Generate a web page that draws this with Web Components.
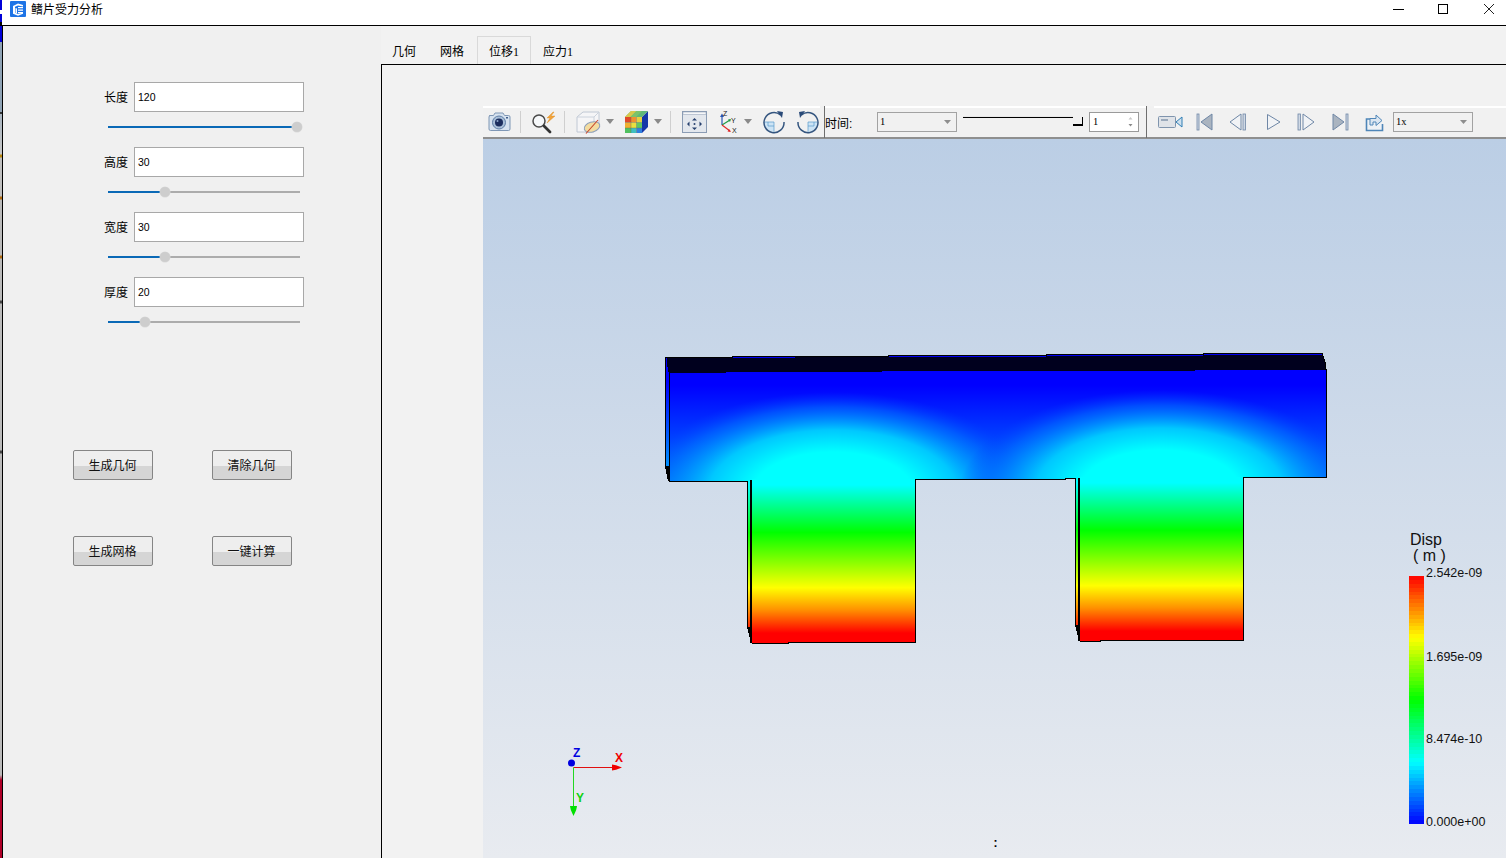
<!DOCTYPE html>
<html>
<head>
<meta charset="utf-8">
<style>
  html, body { margin: 0; padding: 0; background: #f0f0f0; }
</style>
</head>
<body>
<fin-app>
  <fin-titlebar slot="title" text="鳍片受力分析"></fin-titlebar>
  <fin-panel slot="panel">
    <fin-param label="长度" value="120" pos="189"></fin-param>
    <fin-param label="高度" value="30" pos="57"></fin-param>
    <fin-param label="宽度" value="30" pos="57"></fin-param>
    <fin-param label="厚度" value="20" pos="37"></fin-param>
    <fin-button slot="buttons">生成几何</fin-button>
    <fin-button slot="buttons">清除几何</fin-button>
    <fin-button slot="buttons">生成网格</fin-button>
    <fin-button slot="buttons">一键计算</fin-button>
  </fin-panel>
  <fin-tabs slot="main">
    <fin-toolbar></fin-toolbar>
    <fin-viewport></fin-viewport>
  </fin-tabs>
</fin-app>

<script>
class FinApp extends HTMLElement {
  constructor() {
    super();
    const shadow = this.attachShadow({ mode: 'open' });
    // the strip on the far left is the window behind this one peeking out
    shadow.innerHTML = `
      <style>
        :host { display: flex; width: 1506px; height: 858px; overflow: hidden; background: #f0f0f0; color: #000;
                font: 12px "Liberation Sans", "Noto Sans CJK SC", sans-serif; }
        .edge { width: 2px; flex: none; background: linear-gradient(to bottom,
          #0000d8 0, #0000d8 10px, #fff 10px, #fff 14px, #0000d8 14px, #0000d8 22px, #000 22px, #000 26px, #0000d8 26px, #0000d8 42px,
          #8fa3b5 42px, #8fa3b5 112px, #333 112px, #333 114px, #a8b4c0 114px, #c8c8c8 154px, #b8860b 155px, #b8860b 157px, #c0c0c0 158px,
          #c0c0c0 196px, #b06a10 197px, #b06a10 199px, #bbb 200px, #bbb 255px, #b06a10 256px, #b06a10 258px, #bbb 259px,
          #bbb 300px, #444 301px, #444 303px, #bbb 304px, #bbb 450px, #444 451px, #444 453px, #bbb 454px, #bbb 775px,
          #b00028 780px, #b00028 858px); }
        .win { flex: 1; display: flex; flex-direction: column; min-width: 0; }
        .body { flex: 1; display: flex; border-left: 1px solid #000; min-height: 0; }
      </style>
      <div class="edge"></div>
      <div class="win">
        <slot name="title"></slot>
        <div class="body">
          <slot name="panel"></slot>
          <slot name="main"></slot>
        </div>
      </div>`;
  }
}

class FinTitlebar extends HTMLElement {
  constructor() {
    super();
    const shadow = this.attachShadow({ mode: 'open' });
    shadow.innerHTML = `
      <style>
        :host { display: flex; height: 25px; background: #fff; border-bottom: 1px solid #000; align-items: flex-start; padding-left: 8px; box-sizing: content-box; }
        .logo { width: 16px; height: 16px; margin-top: 1px; margin-right: 5px; flex: none; }
        .text { line-height: 20px; font-size: 12px; flex: 1; }
        .btns { display: flex; }
        svg.b { display: block; width: 46px; height: 20px; }
      </style>
      <svg class="logo" viewBox="0 0 16 16">
        <rect width="16" height="16" rx="1" fill="#1e74e6"/>
        <path d="M3 5l5-2.500 5 1.500v1.500l-5-1-3 1.200v6l3 1.300 5-1.500v1.300l-5 2-5-2z" fill="#fff"/>
        <path d="M8 6h5v1.300h-5zM8 8.500h5v1.300h-5zM8 11h5v1.300h-5zM5.500 7l1.500.5v5l-1.500-.5z" fill="#fff"/>
      </svg>
      <div class="text"></div>
      <div class="btns">
        <svg class="b" viewBox="0 0 46 20"><path d="M25 9.500h11" stroke="#000" fill="none"/></svg>
        <svg class="b" viewBox="0 0 46 20"><rect x="24.500" y="4.500" width="9" height="9" fill="none" stroke="#000"/></svg>
        <svg class="b" viewBox="0 0 46 20"><path d="M24 4l10 10M34 4l-10 10" stroke="#222" fill="none" stroke-width="1"/></svg>
      </div>`;
    shadow.querySelector('.text').textContent = this.getAttribute('text');
  }
}

class FinPanel extends HTMLElement {
  constructor() {
    super();
    const shadow = this.attachShadow({ mode: 'open' });
    shadow.innerHTML = `
      <style>
        :host { display: block; width: 378px; flex: none; background: #f0f0f0; padding-top: 56px; box-sizing: border-box; }
        .params { display: flex; flex-direction: column; gap: 5px; }
        .buttons { display: grid; grid-template-columns: 80px 80px; column-gap: 59px; row-gap: 56px; margin: 113px 0 0 70px; }
      </style>
      <div class="params"><slot></slot></div>
      <div class="buttons"><slot name="buttons"></slot></div>`;
  }
}

class FinParam extends HTMLElement {
  constructor() {
    super();
    const shadow = this.attachShadow({ mode: 'open' });
    const pos = Number(this.getAttribute('pos'));
    shadow.innerHTML = `
      <style>
        :host { display: block; }
        .row { display: flex; height: 30px; align-items: center; }
        label { width: 125px; text-align: right; padding-bottom: 1px; font-size: 12px; }
        .input { width: 170px; height: 30px; margin-left: 6px; box-sizing: border-box; background: #fff; border: 1px solid #a8a8a8;
                 padding: 0 3px; line-height: 28px; font-size: 10.500px; }
        .slider { position: relative; height: 30px; width: 192px; margin-left: 105px; }
        .track { position: absolute; left: 0; right: 0; top: 14px; height: 2px; background: #acacac; }
        .fill { position: absolute; left: 0; top: 14px; height: 2px; background: #0a69b6; width: ${pos}px; }
        .handle { position: absolute; top: 10px; left: ${pos - 5}px; width: 10px; height: 10px; border-radius: 50%; background: #cdcdcd; box-shadow: 0 0 0 .5px #d8d8d8; }
      </style>
      <div class="row"><label>${this.getAttribute('label')}</label><div class="input">${this.getAttribute('value')}</div></div>
      <div class="slider"><div class="track"></div><div class="fill"></div><div class="handle"></div></div>`;
  }
}

class FinButton extends HTMLElement {
  constructor() {
    super();
    const shadow = this.attachShadow({ mode: 'open' });
    shadow.innerHTML = `
      <style>
        :host { display: flex; height: 30px; box-sizing: border-box; align-items: center; justify-content: center; font-size: 12px; color: #111;
                padding: 0 1px 1px 0;
                border: 1px solid #858585; border-radius: 2px; background: linear-gradient(to bottom, #eeeeee 0, #eeeeee 15px, #d5d5d5 15px, #d5d5d5 100%); }
      </style>
      <slot></slot>`;
  }
}

class FinTabs extends HTMLElement {
  constructor() {
    super();
    const shadow = this.attachShadow({ mode: 'open' });
    shadow.innerHTML = `
      <style>
        :host { display: flex; flex-direction: column; flex: 1; min-width: 0; background: #f2f2f2; padding-top: 10px; box-sizing: border-box; }
        .bar { display: flex; height: 28px; font: 12px "Liberation Serif", "Noto Sans CJK SC", sans-serif; }
        .tab { padding: 0 12px; line-height: 32px; }
        .tab.on { border: 1px solid #d9d9d9; border-bottom: 0; padding: 0 11px; line-height: 30px; }
        .pane { flex: 1; min-height: 0; display: flex; flex-direction: column; border-top: 1px solid #000; border-left: 1px solid #000; padding: 41px 0 0 101px; }
      </style>
      <div class="bar">
        <div class="tab" style="padding-left:11px">几何</div><div class="tab">网格</div><div class="tab on" style="margin-left:1px">位移1</div><div class="tab">应力1</div>
      </div>
      <div class="pane"><slot></slot></div>`;
  }
}

class FinCombo extends HTMLElement {
  constructor() {
    super();
    const shadow = this.attachShadow({ mode: 'open' });
    shadow.innerHTML = `
      <style>
        :host { display: flex; align-items: center; box-sizing: border-box; width: 80px; height: 20px; border: 1px solid #a2a2a2; background: #f1f1f1;
                padding: 0 2px; font: 10.500px "Liberation Serif", serif; flex: none; }
        span { flex: 1; }
        svg { width: 7px; height: 4px; margin-right: 3px; }
      </style>
      <span><slot></slot></span>
      <svg viewBox="0 0 7 4"><path d="M0 0h7l-3.500 4z" fill="#8e8e8e"/></svg>`;
  }
}

class FinSpin extends HTMLElement {
  constructor() {
    super();
    const shadow = this.attachShadow({ mode: 'open' });
    shadow.innerHTML = `
      <style>
        :host { display: flex; align-items: center; box-sizing: border-box; width: 50px; height: 20px; border: 1px solid #9a9a9a; background: #fff;
                padding: 0 4px 0 3px; font: 10.500px "Liberation Serif", serif; flex: none; }
        span { flex: 1; }
        svg { width: 5px; height: 12px; margin-right: 1px; }
      </style>
      <span><slot></slot></span>
      <svg viewBox="0 0 5 12"><path d="M2.500 1l2 2.500h-4z" fill="#c8c8c8"/><path d="M.5 8h4l-2 2.500z" fill="#8a8a8a"/></svg>`;
  }
}

const DROP = ml => `<svg style="margin-left:${ml}px" width="8" height="5" viewBox="0 0 8 5"><path d="M0 0h8l-4 5z" fill="#8a8a8a"/></svg>`;

class FinToolbar extends HTMLElement {
  constructor() {
    super();
    const shadow = this.attachShadow({ mode: 'open' });
    shadow.innerHTML = `
      <style>
        :host { display: flex; height: 33px; flex: none; box-sizing: border-box; background: #f1f1f1; border-bottom: 2px solid #8f8f8f; align-items: stretch; }
        .grp { display: flex; align-items: center; border-top: 2px solid #fff; padding-bottom: 2px; }
        .grp.last { flex: 1; margin-left: 7px; }
        .sep { width: 1px; height: 22px; background: #cfcfcf; flex: none; }
        .dark { width: 1px; background: #6e6e6e; margin-bottom: -1px; flex: none; }
        svg { flex: none; display: block; }
        .time { width: 52px; font-size: 12px; padding-top: 1px; flex: none; }
        .slider { position: relative; width: 120px; height: 20px; margin-left: 6px; flex: none; }
        .slider i { position: absolute; left: 0; right: 10px; top: 5px; height: 1px; background: #000; box-shadow: 0 -1px 0 #e8e8e8; }
        .slider b { position: absolute; right: 0; top: 5px; width: 9px; height: 7px; border-right: 1px solid #000; border-bottom: 2px solid #000; }
      </style>
      <div class="grp" style="width:337px">
        <svg style="margin-left:4px" width="24" height="21" viewBox="0 0 24 21">
          <path d="M2.500 4.500h4l1.500-2.500h8l1.500 2.500h4a1.500 1.500 0 0 1 1.500 1.500v12a1.500 1.500 0 0 1-1.500 1.500h-18a1.500 1.500 0 0 1-1.500-1.500v-12a1.500 1.500 0 0 1 1.500-1.500z" fill="#d6e2ef" stroke="#7f97b5"/>
          <circle cx="12" cy="11.500" r="6.500" fill="#a9bfd8" stroke="#5f7ea6"/>
          <circle cx="12" cy="11.500" r="4" fill="#1b2d5e"/>
          <circle cx="10.500" cy="10" r="1" fill="#8ea7ca"/>
          <rect x="19" y="6" width="2" height="1.500" fill="#3d5c8a"/>
        </svg>
        <div class="sep" style="margin-left:9px"></div>
        <svg style="margin-left:10px" width="25" height="24" viewBox="0 0 25 24">
          <circle cx="8" cy="11" r="6" fill="#f6f8fa" stroke="#4a4a4a" stroke-width="1.500"/>
          <path d="M13 16l6 6" stroke="#333" stroke-width="2.800" stroke-linecap="round"/>
          <path d="M22 2l-6 6h3l-3 5 8-7h-4l3-4z" fill="#f2a33a" stroke="#d98a1f" stroke-width=".4"/>
        </svg>
        <div class="sep" style="margin-left:8px"></div>
        <svg style="margin-left:11px" width="26" height="24" viewBox="0 0 26 24">
          <path d="M1 7l6-5h16v15l-5 5H1z" fill="#f5f5f7" stroke="#c0c8d4"/>
          <path d="M1 7h17v15M18 7l5-5" fill="none" stroke="#cbd2dc"/>
          <ellipse cx="16" cy="17" rx="8" ry="5" transform="rotate(-18 16 17)" fill="#f3dca0" stroke="#8fa1ba"/>
          <path d="M10 23.500L22 10" stroke="#c8452a" stroke-width="1.100"/>
        </svg>
        ${DROP(4)}
        <svg style="margin-left:10px" width="25" height="24" viewBox="0 0 25 24">
          <path d="M18 23l6-6V1l-6 6z" fill="#1538a8"/>
          <path d="M1 7l6-6h17l-6 6z" fill="#5fb878"/>
          <path d="M7 1h5.500l-6 6H1z" fill="#d9c84a"/><path d="M12.500 1H18l-6 6H6.500z" fill="#7cc36a"/>
          <rect x="1" y="7" width="6" height="5.500" fill="#e04a2a"/><rect x="7" y="7" width="5.500" height="5.500" fill="#f09030"/><rect x="12.500" y="7" width="5.500" height="5.500" fill="#e8d040"/>
          <rect x="1" y="12.500" width="6" height="5.500" fill="#f0b030"/><rect x="7" y="12.500" width="5.500" height="5.500" fill="#e8e040"/><rect x="12.500" y="12.500" width="5.500" height="5.500" fill="#60c860"/>
          <rect x="1" y="18" width="6" height="5" fill="#50c060"/><rect x="7" y="18" width="5.500" height="5" fill="#40c0c0"/><rect x="12.500" y="18" width="5.500" height="5" fill="#3080e0"/>
          <path d="M7 7v16M12.500 7v16M1 12.500h17M1 18h17" stroke="#5a6a5a" stroke-width=".4"/>
        </svg>
        ${DROP(5)}
        <div class="sep" style="margin-left:8px"></div>
        <svg style="margin-left:11px" width="25" height="24" viewBox="0 0 25 24">
          <rect x=".5" y="1.500" width="24" height="21" fill="#e3e7ed" stroke="#8b9cb4"/>
          <rect x="1" y="2" width="23" height="2.500" fill="#f6f7f9" stroke="#8b9cb4" stroke-width=".5"/>
          <path d="M12.500 8l2.500 2.500h-5zM12.500 20l-2.500-2.500h5zM5 14l2.500-2.500v5zM20 14l-2.500 2.500v-5z" fill="#27406e"/>
          <circle cx="12.500" cy="14" r="1" fill="#27406e"/>
        </svg>
        <svg style="margin-left:10px" width="20" height="24" viewBox="0 0 20 24">
          <path d="M5 15V6" stroke="#2a57b5" stroke-width="1.200"/><path d="M5 3.500l2 3.500h-4z" fill="#2a57b5"/>
          <path d="M5 15l8-5" stroke="#1f9a45" stroke-width="1.200"/><path d="M14 9l-1 3-2-2.500z" fill="#1f9a45"/>
          <path d="M5 15l8 6" stroke="#df2a2a" stroke-width="1.200"/><path d="M14 22l-3.500-.5 1.500-2.500z" fill="#df2a2a"/>
          <text x="6" y="6" font-size="7" font-family="Liberation Sans" fill="#222">Z</text>
          <text x="14" y="13" font-size="7" font-family="Liberation Sans" fill="#222">Y</text>
          <text x="15" y="23" font-size="7" font-family="Liberation Sans" fill="#222">X</text>
        </svg>
        ${DROP(7)}
        <svg style="margin-left:10px" width="24" height="24" viewBox="0 0 24 24">
          <path d="M2 12h10v10A10 10 0 0 1 2 12z" fill="#cde4f5"/>
          <path d="M12 12v10M2 12h10M6 12v4h6" fill="none" stroke="#5a9ccc" stroke-width=".7"/>
          <path d="M18.500 5A10 10 0 1 0 22 12" fill="none" stroke="#34557f" stroke-width="1.500"/>
          <path d="M15 1l6 1-1 6z" fill="#2a4a78"/>
        </svg>
        <svg style="margin-left:10px" width="24" height="24" viewBox="0 0 24 24">
          <path d="M22 12H12v10A10 10 0 0 0 22 12z" fill="#cde4f5"/>
          <path d="M12 12v10M22 12H12M18 12v4h-6" fill="none" stroke="#5a9ccc" stroke-width=".7"/>
          <path d="M5.500 5A10 10 0 1 1 2 12" fill="none" stroke="#34557f" stroke-width="1.500"/>
          <path d="M9 1L3 2l1 6z" fill="#2a4a78"/>
        </svg>
      </div>
      <div class="dark" style="margin-left:4px"></div>
      <div class="grp" style="width:321px">
        <div class="time">时间:</div>
        <fin-combo>1</fin-combo>
        <div class="slider"><i></i><b></b></div>
        <fin-spin style="margin-left:6px">1</fin-spin>
      </div>
      <div class="dark" style="margin-left:0"></div>
      <div class="grp last">
        <svg style="margin-left:4px" width="25" height="16" viewBox="0 0 25 16">
          <rect x=".5" y="2.500" width="17" height="11" rx="1" fill="#dfe3e8" stroke="#7f94ad"/>
          <rect x="3" y="5" width="7" height="2" fill="#9aa9bb"/>
          <path d="M18 8l6-5v10z" fill="#cfe0ee" stroke="#2f7fb5"/>
        </svg>
        <svg style="margin-left:13px" width="17" height="18" viewBox="0 0 17 18">
          <rect x="1" y="1" width="2" height="16" fill="#cfd8e4" stroke="#6f87a6" stroke-width=".8"/>
          <path d="M16 1v16L5 9z" fill="#aab4c0" stroke="#6f87a6"/>
        </svg>
        <svg style="margin-left:16px" width="18" height="18" viewBox="0 0 18 18">
          <path d="M12 1v16L1 9z" fill="#f1f3f6" stroke="#6f87a6"/>
          <rect x="14" y="1" width="2.500" height="16" fill="#cfd8e4" stroke="#6f87a6" stroke-width=".8"/>
        </svg>
        <svg style="margin-left:19px" width="15" height="18" viewBox="0 0 15 18">
          <path d="M1.500 1.500v15L14 9z" fill="#f1f3f6" stroke="#6f87a6"/>
        </svg>
        <svg style="margin-left:16px" width="18" height="18" viewBox="0 0 18 18">
          <rect x="1" y="1" width="2.500" height="16" fill="#cfd8e4" stroke="#6f87a6" stroke-width=".8"/>
          <path d="M6 1v16L17 9z" fill="#f1f3f6" stroke="#6f87a6"/>
        </svg>
        <svg style="margin-left:17px" width="17" height="18" viewBox="0 0 17 18">
          <path d="M1 1v16L12 9z" fill="#aab4c0" stroke="#6f87a6"/>
          <rect x="14" y="1" width="2" height="16" fill="#cfd8e4" stroke="#6f87a6" stroke-width=".8"/>
        </svg>
        <svg style="margin-left:16px" width="20" height="20" viewBox="0 0 20 20">
          <path d="M6 7H1.500v11.500h16V12" fill="#eef2f6" stroke="#4f86b8" stroke-width="1.600"/>
          <path d="M5 13V6.500h6V3l6 5.500-6 5V10H8v3z" fill="#dbe6f1" stroke="#4f86b8"/>
        </svg>
        <fin-combo style="margin-left:8px">1x</fin-combo>
      </div>`;
  }
}

class FinViewport extends HTMLElement {
  constructor() {
    super();
    const shadow = this.attachShadow({ mode: 'open' });
    // the viewBox is in page coordinates, so numbers read off the screenshot go in as they are
    let bands = '';
    const n = 64, top = 576, h = 248 / n;
    for (let i = 0; i < n; i++) {
      const t = 1 - (i + 0.5) / n;
      bands += `<rect x="1409" y="${top + i * h}" width="15" height="${h + 0.3}" fill="${rainbow(t)}"/>`;
    }
    shadow.innerHTML = `
      <style>
        :host { display: block; flex: 1; min-height: 0; background: linear-gradient(to bottom, #bbcee5, #e8ebf0); }
        svg { display: block; }
        text { font-family: "Liberation Sans", sans-serif; }
        .lab { font-size: 12.500px; fill: #111; }
        .ax { font-size: 12px; font-weight: bold; }
      </style>
      <svg width="1023" height="719" viewBox="483 139 1023 719">
        <defs>
          <linearGradient id="leg" gradientUnits="userSpaceOnUse" x1="0" y1="478" x2="0" y2="643">
            <stop offset="0.042" stop-color="#00ffff"/><stop offset="0.33" stop-color="#00ff00"/>
            <stop offset="0.665" stop-color="#ffff00"/><stop offset="0.80" stop-color="#ff9000"/><stop offset="0.94" stop-color="#ff0000"/>
          </linearGradient>
          <linearGradient id="leg2" gradientUnits="userSpaceOnUse" x1="0" y1="476" x2="0" y2="641">
            <stop offset="0.042" stop-color="#00ffff"/><stop offset="0.33" stop-color="#00ff00"/>
            <stop offset="0.665" stop-color="#ffff00"/><stop offset="0.80" stop-color="#ff9000"/><stop offset="0.94" stop-color="#ff0000"/>
          </linearGradient>
          <linearGradient id="base" gradientUnits="userSpaceOnUse" x1="0" y1="372" x2="0" y2="481">
            <stop offset="0.12" stop-color="#0000ff"/><stop offset="0.6" stop-color="#0040ff"/><stop offset="1" stop-color="#0080f8"/>
          </linearGradient>
          <linearGradient id="side" gradientUnits="userSpaceOnUse" x1="0" y1="372" x2="0" y2="466">
            <stop offset="0.1" stop-color="#0000ff"/><stop offset="1" stop-color="#0090ff"/>
          </linearGradient>
          <radialGradient id="glowA" gradientUnits="userSpaceOnUse" cx="0" cy="0" r="1" gradientTransform="translate(833 492) scale(200 100)">
            <stop offset="0.40" stop-color="#00ffff"/><stop offset="0.62" stop-color="#00c8ff"/>
            <stop offset="0.85" stop-color="#0070ff" stop-opacity=".6"/><stop offset="1" stop-color="#0040ff" stop-opacity="0"/>
          </radialGradient>
          <radialGradient id="glowB" gradientUnits="userSpaceOnUse" cx="0" cy="0" r="1" gradientTransform="translate(1160 490) scale(200 100)">
            <stop offset="0.40" stop-color="#00ffff"/><stop offset="0.62" stop-color="#00c8ff"/>
            <stop offset="0.85" stop-color="#0070ff" stop-opacity=".6"/><stop offset="1" stop-color="#0040ff" stop-opacity="0"/>
          </radialGradient>
        </defs>

        <g shape-rendering="crispEdges">
          <!-- back faces peeking out -->
          <rect x="666" y="358" width="3" height="108" fill="url(#side)"/>
          <rect x="748" y="481" width="2" height="147" fill="url(#leg)"/>
          <rect x="1076" y="479" width="2" height="147" fill="url(#leg2)"/>
          <path d="M666 357H732V356H888V355H1046V354H1203V353H1322V362H666Z" fill="#0000f0"/>
          <path d="M667 358H795V357H1046V356H1203V355H1322L1324 358L1325 362L1326 375H669L667 364Z" fill="#00001e"/>
          <!-- stair steps where the model's back edge shows -->
          <path d="M665 466H669V481L668 481Z" fill="#000"/>
          <path d="M747 627H752V643H751Z" fill="#000"/>
          <path d="M1075 625H1080V641H1079Z" fill="#000"/>

          <!-- front face -->
          <path d="M669 373H726V372H882V371H1195V370H1326V477H1244V479H916V481H669Z" fill="url(#base)"/>
          <path d="M669 373H726V372H882V371H1195V370H1326V477H1244V479H916V481H669Z" fill="url(#glowA)"/>
          <path d="M669 373H726V372H882V371H1195V370H1326V477H1244V479H916V481H669Z" fill="url(#glowB)"/>
          <rect x="752" y="479" width="164" height="164" fill="url(#leg)"/>
          <rect x="1080" y="477" width="164" height="164" fill="url(#leg2)"/>

          <!-- silhouette -->
          <g fill="none" stroke="#000" stroke-width="1">
            <path d="M665.500 466.500V357.500H732V356.500H888V355.500H1046V354.500H1203V353.500H1322.500L1323.500 358L1325 362L1326 369.500V477.500H1243.500V640.500H1100V641.500H1079.500"/>
            <path d="M669 481.500H747.500V627.500M751.500 643.500H788V642.500H915.500V479.500H1065V478.500H1075.500V625.500"/>
          </g>
          <rect x="750" y="480" width="2" height="163" fill="#000"/>
          <rect x="1078" y="478" width="2" height="163" fill="#000"/>
          <rect x="669" y="373" width="1" height="108" fill="#000"/>
        </g>

        <!-- axes triad -->
        <path d="M573.500 767.500H615" stroke="#e01010" stroke-width="1"/>
        <path d="M573.500 767.500V808" stroke="#22d822" stroke-width="1"/>
        <path d="M612 764.500l4 .8 6 2.200-6 2.200-4 .8z" fill="#f00000"/>
        <path d="M570 806l.8 4 2.700 6 2.700-6 .8-4z" fill="#00e000"/>
        <circle cx="571.500" cy="763" r="3.500" fill="#0000e0"/>
        <text class="ax" x="573" y="757" fill="#0000e0">Z</text>
        <text class="ax" x="615" y="762" fill="#f00000">X</text>
        <text class="ax" x="576" y="802" fill="#10d010">Y</text>

        <!-- colour legend -->
        <g shape-rendering="crispEdges">${bands}</g>
        <text x="1410" y="545" font-size="16" fill="#111">Disp</text>
        <text x="1413" y="561" font-size="16" fill="#111">( m )</text>
        <text class="lab" x="1426" y="577">2.542e-09</text>
        <text class="lab" x="1426" y="661">1.695e-09</text>
        <text class="lab" x="1426" y="743">8.474e-10</text>
        <text class="lab" x="1426" y="826">0.000e+00</text>

        <text x="993.500" y="847" font-size="12" font-weight="bold" fill="#000">:</text>
      </svg>`;
  }
}

function rainbow(t) {
  // blue, cyan, green, yellow, red in equal steps
  const stops = [[0, 0, 255], [0, 255, 255], [0, 255, 0], [255, 255, 0], [255, 0, 0]];
  const p = Math.min(t * 4, 3.999);
  const i = Math.floor(p), f = p - i;
  const c = stops[i].map((v, k) => Math.round(v + (stops[i + 1][k] - v) * f));
  return `rgb(${c.join(',')})`;
}

customElements.define('fin-combo', FinCombo);
customElements.define('fin-spin', FinSpin);
customElements.define('fin-button', FinButton);
customElements.define('fin-param', FinParam);
customElements.define('fin-panel', FinPanel);
customElements.define('fin-titlebar', FinTitlebar);
customElements.define('fin-toolbar', FinToolbar);
customElements.define('fin-viewport', FinViewport);
customElements.define('fin-tabs', FinTabs);
customElements.define('fin-app', FinApp);
</script>
</body>
</html>
